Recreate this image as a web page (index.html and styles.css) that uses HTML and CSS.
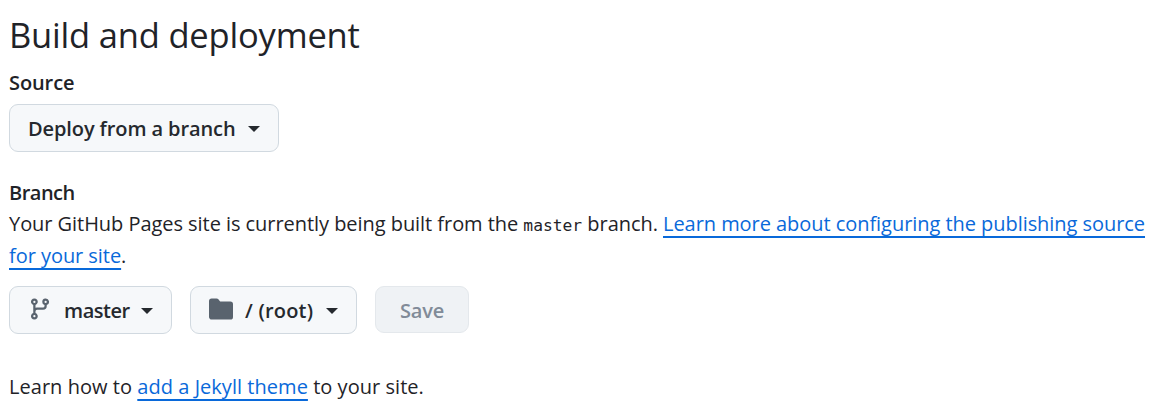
FILE: index.html
```html
<!DOCTYPE html>
<html lang="en">
<head>
<meta charset="utf-8">
<title>Build and deployment</title>
<link rel="stylesheet" href="styles.css">
</head>
<body>
<main class="settings">
  <h1 class="title">Build and deployment</h1>
  <h2 class="label label-source">Source</h2>
  <button class="btn btn-source"><span class="btn-text">Deploy from a branch</span><span class="caret"></span></button>
  <h2 class="label label-branch">Branch</h2>
  <p class="text">Your GitHub Pages site is currently being built from the <code class="code">master</code> branch. <a class="link">Learn more about configuring the publishing source<br>for your site</a>.</p>
  <div class="row">
    <button class="btn btn-branch">
      <svg class="icon" viewBox="0 0 16 16"><path d="M9.5 3.25a2.25 2.25 0 1 1 3 2.122V6A2.5 2.5 0 0 1 10 8.5H6a1 1 0 0 0-1 1v1.128a2.251 2.251 0 1 1-1.5 0V5.372a2.25 2.25 0 1 1 1.5 0v1.836A2.493 2.493 0 0 1 6 7h4a1 1 0 0 0 1-1v-.628A2.25 2.25 0 0 1 9.5 3.25Zm-6 0a.75.75 0 1 0 1.5 0 .75.75 0 0 0-1.5 0Zm8.25-.75a.75.75 0 1 0 0 1.5.75.75 0 0 0 0-1.5ZM4.25 12a.75.75 0 1 0 0 1.5.75.75 0 0 0 0-1.5Z"/></svg>
      <span class="btn-text">master</span><span class="caret"></span>
    </button>
    <button class="btn btn-folder">
      <svg class="icon" viewBox="0 0 16 16"><path d="M1.75 1A1.75 1.75 0 0 0 0 2.75v10.5C0 14.216.784 15 1.75 15h12.5A1.75 1.75 0 0 0 16 13.25v-8.5A1.75 1.75 0 0 0 14.25 3H7.5a.25.25 0 0 1-.2-.1l-.9-1.2C6.07 1.26 5.55 1 5 1H1.75Z"/></svg>
      <span class="btn-text">/ (root)</span><span class="caret"></span>
    </button>
    <button class="btn btn-save" disabled><span class="btn-text">Save</span></button>
  </div>
  <p class="text theme">Learn how to <a class="link">add a Jekyll theme</a> to your site.</p>
</main>
</body>
</html>
```
FILE: styles.css
```css
* { box-sizing: border-box; }
body {
  margin: 0;
  background: #fff;
  color: #1f2328;
  font-family: "Open Sans", "Noto Sans", sans-serif;
}
.settings {
  display: flex;
  flex-direction: column;
  align-items: flex-start;
  padding: 11px 0 0 9px;
}
.title { margin: 0; font-size: 34.5px; font-weight: 400; line-height: 48px; letter-spacing: -0.19px; white-space: nowrap; }
.label { margin: 0; font-size: 20px; font-weight: 600; line-height: 32px; letter-spacing: -0.1px; }
.label-source { margin-top: 8px; }
.label-branch { margin-top: 25px; letter-spacing: -0.5px; }
.btn {
  display: flex;
  align-items: center;
  height: 48px;
  margin: 0;
  padding: 0 18px;
  border: 1px solid #d1d9e0;
  border-radius: 9px;
  background: #f6f8fa;
  color: #25292e;
  font: 600 20px/30px "Open Sans", "Noto Sans", sans-serif;
  white-space: nowrap;
}
.btn-source { width: 270px; margin-top: 5px; letter-spacing: -0.1px; }
.btn-text { padding-top: 2px; }
.caret {
  width: 0;
  margin-left: auto;
  border: 6px solid transparent;
  border-top-color: currentColor;
  border-bottom: 0;
  position: relative;
  top: 1px;
}
.text { margin: -1px 0 0; font-size: 20px; line-height: 32px; letter-spacing: -0.05px; white-space: nowrap; }
.code { font-family: "DejaVu Sans Mono", monospace; font-size: 16.3px; line-height: 0; letter-spacing: 0; }
.link {
  color: #0969da;
  text-decoration: underline;
  text-decoration-thickness: 2px;
  text-underline-offset: 5px;
  text-decoration-skip-ink: none;
}
.row { display: flex; align-items: flex-start; gap: 18px; margin-top: 14px; }
.icon { width: 24px; height: 24px; fill: #59636e; margin-top: -3px; flex: none; }
.btn-branch { width: 163px; letter-spacing: -0.45px; }
.btn-branch .btn-text { margin-left: 12px; }
.btn-folder { width: 167px; letter-spacing: 0.2px; }
.btn-folder .btn-text { margin-left: 12px; }
.btn-save { width: 94px; height: 47px; justify-content: center; padding: 1px 0 0; background: #eff2f5; border-color: #e4e8ec; color: #818b98; letter-spacing: -0.2px; }
.theme { margin-top: 37px; letter-spacing: 0.04px; }
```
